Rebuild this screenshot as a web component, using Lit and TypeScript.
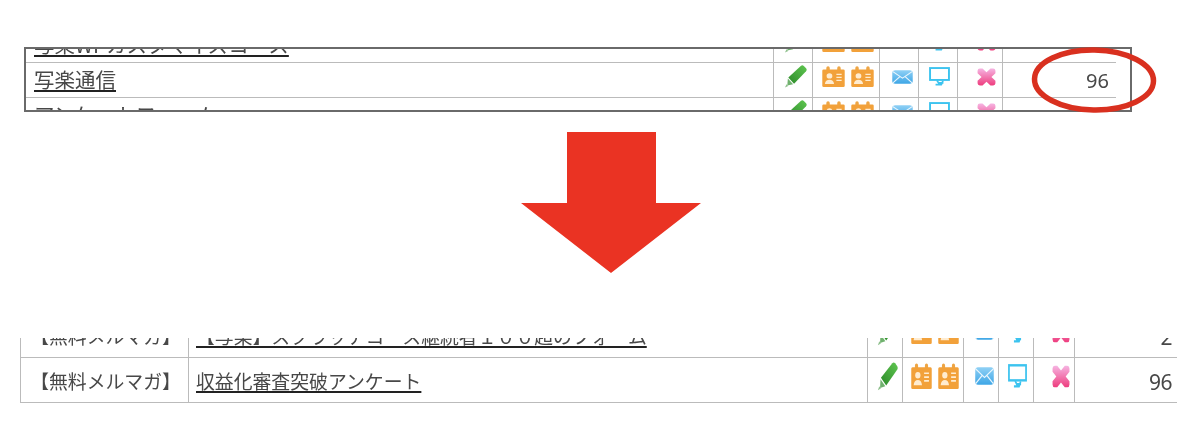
import { LitElement, html, css, svg } from "lit";
import { customElement } from "lit/decorators.js";

const pencil = html`<svg class="i pencil" viewBox="0 0 24 24" preserveAspectRatio="none">
  <defs><linearGradient id="pg" x1="0" y1="1" x2="1" y2="0"><stop offset="0" stop-color="#2c8a2a"/><stop offset="1" stop-color="#5fc650"/></linearGradient></defs>
  <path d="M4.500 13 17.500 1a2.500 2.500 0 0 1 3.200 0l2.300 2.300a2.500 2.500 0 0 1 0 3.200L10.500 19.500Z" fill="url(#pg)"/>
  <path d="M4 14.200 9.500 20 3.500 21.500Z" fill="#6fb16d"/>
  <path d="M2.600 20 4.400 22 1 23.400Z" fill="#8fc08d"/>
</svg>`;

const badge = html`<svg class="i badge" viewBox="0 0 24 24" preserveAspectRatio="none">
  <path d="M4.500 6V2.200a1.800 1.800 0 0 1 3.600 0V6ZM15.900 6V2.200a1.800 1.800 0 0 1 3.600 0V6Z" fill="#eea544"/>
  <rect x="0.300" y="4" width="23.400" height="20" rx="1.400" fill="#f2a13a"/>
  <circle cx="7.800" cy="11.400" r="3" fill="#ffecd0"/>
  <path d="M3 20.500c.3-3 2.200-4.700 4.800-4.700s4.500 1.700 4.800 4.700Z" fill="#ffecd0"/>
  <path d="M15 9.500h5.500M15 13h5.500M15 16.500h5.500" stroke="#ffecd0" stroke-width="1.500"/>
</svg>`;

const mail = html`<svg class="i mail" viewBox="0 0 24 18" preserveAspectRatio="none">
  <defs><linearGradient id="mg" x1="0" y1="0" x2="0" y2="1"><stop offset="0" stop-color="#8fd0f5"/><stop offset="1" stop-color="#3ea6e6"/></linearGradient></defs>
  <rect x="0.300" y="0.300" width="23.400" height="17.400" rx="3.500" fill="url(#mg)"/>
  <path d="M1 2 12 10.500 23 2M1 16.500 9 8.500M23 16.500 15 8.500" fill="none" stroke="#eaf6fd" stroke-width="1.300"/>
</svg>`;

const monitor = html`<svg class="i monitor" viewBox="0 0 24 22" preserveAspectRatio="none">
  <rect x="1.200" y="1.200" width="21.600" height="13.800" fill="#fff" stroke="#3cc3ef" stroke-width="2.200"/>
  <path d="M9 15.500 11 18.500h5.500M16 16 14 20.500H7.500" fill="none" stroke="#3cc3ef" stroke-width="2"/>
</svg>`;

const cross = html`<svg class="i cross" viewBox="0 0 20 20" preserveAspectRatio="none">
  <defs><linearGradient id="xg" x1="0" y1="0" x2="0" y2="1"><stop offset="0" stop-color="#f6b4e2"/><stop offset="1" stop-color="#ee3d7e"/></linearGradient></defs>
  <path d="M3 .6h2.800L10 4.800 14.200.6H17A2.500 2.500 0 0 1 19.400 3V5.800L15.200 10 19.400 14.200V17A2.500 2.500 0 0 1 17 19.400H14.200L10 15.200 5.800 19.400H3A2.500 2.500 0 0 1 .6 17V14.200L4.800 10 .6 5.800V3A2.500 2.500 0 0 1 3 .6Z" fill="url(#xg)"/>
</svg>`;

const icons = () => html`
  <div class="cell ic c-pencil">${pencil}</div>
  <div class="cell ic c-badge">${badge}${badge}</div>
  <div class="cell ic c-mail">${mail}</div>
  <div class="cell ic c-monitor">${monitor}</div>
  <div class="cell ic c-cross">${cross}</div>
`;

const topRows = [
  { name: "写楽WPカスタマイズコース", n: "" },
  { name: "写楽通信", n: "96" },
  { name: "アンケートフォーム", n: "" },
];
const bottomRows = [
  { cat: "【無料メルマガ】", name: "【写楽】スクラッチコース継続者１００超のフォーム", n: "2" },
  { cat: "【無料メルマガ】", name: "収益化審査突破アンケート", n: "96" },
];

@customElement("app-root")
export class AppRoot extends LitElement {
  static styles = css`
    :host {
      display: block;
      width: 1200px;
      height: 438px;
      position: relative;
      overflow: hidden;
      background: #fff;
      font-family: "Noto Sans CJK JP", "Noto Sans", sans-serif;
      color: #484848;
    }
    .blur { filter: blur(0.4px); }
    .upper {
      box-sizing: border-box;
      width: 1108px;
      height: 65px;
      margin: 47px 0 0 24px;
      border: 2px solid #6a6a6a;
      overflow: hidden;
    }
    .upper .table { width: 1090px; margin-top: -21px; }
    .upper .row {
      display: grid;
      grid-template-columns: 748px 39px 67px 39px 39px 45px 113px;
      height: 35px;
    }
    .arrow { display: block; margin: 20px 0 0 521px; }
    .lower {
      box-sizing: border-box;
      width: 1157px;
      height: 65px;
      margin: 65px 0 0 20px;
      border-left: 1px solid #bbb;
      overflow: hidden;
    }
    .lower .table { margin-top: -25px; }
    .lower .row {
      display: grid;
      grid-template-columns: 168px 679px 35px 61px 35px 35px 41px 103px;
      height: 45px;
    }
    .row { box-sizing: border-box; border-bottom: 1px solid #bbb; }
    .cell {
      box-sizing: border-box;
      border-right: 1px solid #bbb;
      display: flex;
      align-items: center;
      min-width: 0;
      white-space: nowrap;
    }
    .cell:last-child { border-right: none; }
    .name a {
      color: #484848;
      text-decoration: underline;
      text-decoration-color: #222;
      text-decoration-thickness: 2px;
      text-underline-offset: 2px;
    }
    .upper .name { padding: 0 0 3px 8px; font-size: 20.500px; }
    .num { font-family: "Noto Sans", sans-serif; justify-content: flex-end; }
    .upper .num { padding-right: 7px; font-size: 20px; }
    .lower .cat { justify-content: center; padding-left: 2px; font-size: 18.850px; }
    .lower .name { padding-left: 7px; font-size: 18.850px; }
    .lower .num { padding: 3px 6px 0 0; font-size: 21px; letter-spacing: -0.500px; }
    .ic { justify-content: center; gap: 6px; padding-bottom: 7px; }
    .lower .ic { padding-bottom: 8px; }
    .c-pencil { padding-left: 5px; }
    .c-badge { padding-left: 4px; }
    .c-mail { padding-left: 7px; }
    .c-monitor { padding-left: 3px; }
    .c-cross { padding-left: 13px; }
    .i { display: block; flex: none; }
    .upper .pencil { width: 23px; height: 23px; }
    .upper .badge { width: 23px; height: 21px; }
    .upper .mail { width: 21px; height: 14px; }
    .upper .monitor { width: 21px; height: 19px; }
    .upper .cross { width: 19px; height: 18px; }
    .lower .pencil { width: 21px; height: 29px; }
    .lower .badge { width: 21px; height: 26px; }
    .lower .mail { width: 19px; height: 18px; }
    .lower .monitor { width: 19px; height: 24px; }
    .lower .cross { width: 18px; height: 23px; }
    .ring { position: absolute; left: 1024px; top: 40px; }
  `;

  render() {
    return html`
      <div class="upper blur">
        <div class="table">
          ${topRows.map(
            (r) => html`<div class="row">
              <div class="cell name"><a>${r.name}</a></div>
              ${icons()}
              <div class="cell num">${r.n}</div>
            </div>`
          )}
        </div>
      </div>
      <svg class="arrow" width="180" height="141" viewBox="0 0 180 141">
        <path d="M46 0H135V71H180L90 141 0 71H46Z" fill="#ea3323" />
      </svg>
      <div class="lower blur">
        <div class="table">
          ${bottomRows.map(
            (r) => html`<div class="row">
              <div class="cell cat">${r.cat}</div>
              <div class="cell name"><a>${r.name}</a></div>
              ${icons()}
              <div class="cell num">${r.n}</div>
            </div>`
          )}
        </div>
      </div>
      <svg class="ring" width="140" height="80" viewBox="0 0 140 80">
        ${svg`<ellipse cx="70" cy="40" rx="59.500" ry="30" fill="none" stroke="#d9301f" stroke-width="5.500" transform="rotate(1 70 40)"/>`}
      </svg>
    `;
  }
}
